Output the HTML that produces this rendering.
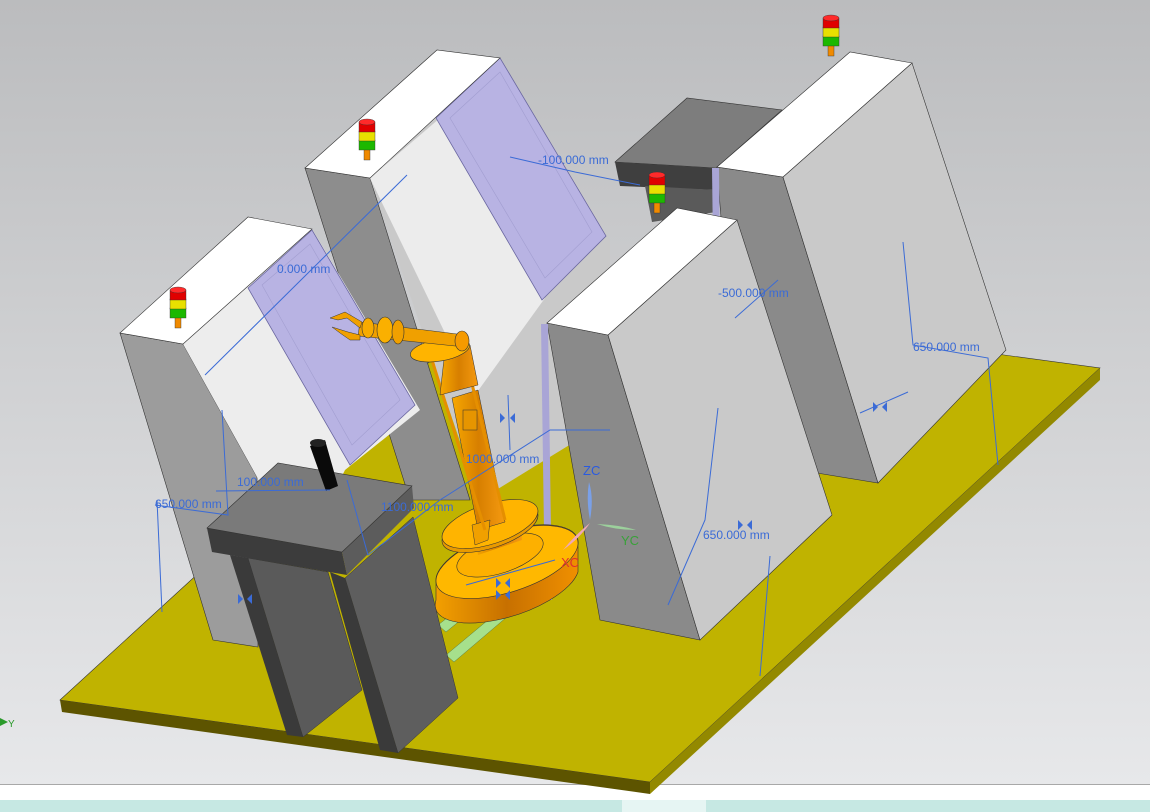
<!DOCTYPE html>
<html><head><meta charset="utf-8"><style>
html,body{margin:0;padding:0;width:1150px;height:812px;overflow:hidden;background:#fff}
svg{display:block}
text{font-family:"Liberation Sans",sans-serif}
</style></head><body>
<svg width="1150" height="812" viewBox="0 0 1150 812" xmlns="http://www.w3.org/2000/svg">
<defs>
<linearGradient id="bg" x1="0" y1="0" x2="0" y2="1">
<stop offset="0" stop-color="#bbbcbe"/><stop offset="1" stop-color="#e7e8ea"/></linearGradient>
<linearGradient id="col" x1="0" y1="0" x2="1" y2="0">
<stop offset="0" stop-color="#f7a800"/><stop offset="0.5" stop-color="#d77f00"/><stop offset="1" stop-color="#f59a10"/></linearGradient>
<linearGradient id="bside" x1="0" y1="0" x2="1" y2="0">
<stop offset="0" stop-color="#f3a000"/><stop offset="0.5" stop-color="#c77000"/><stop offset="1" stop-color="#f09000"/></linearGradient>
<g id="sl">
<rect x="-3" y="26" width="6" height="12" fill="#f08a00" stroke="#333" stroke-width="0.4"/>
<rect x="-8" y="18" width="16" height="10" fill="#1cb800" stroke="#333" stroke-width="0.4"/>
<rect x="-8" y="9" width="16" height="10" fill="#e8e000" stroke="#333" stroke-width="0.4"/>
<rect x="-8" y="0" width="16" height="10" fill="#e00000" stroke="#333" stroke-width="0.4"/>
<ellipse cx="0" cy="0" rx="8" ry="3" fill="#ff2a2a" stroke="#333" stroke-width="0.4"/>
</g>
</defs>
<rect x="0" y="0" width="1150" height="785" fill="url(#bg)"/>
<rect x="0" y="784" width="1150" height="1" fill="#a8a8a8"/>
<rect x="0" y="785" width="1150" height="15" fill="#fff"/>
<rect x="0" y="800" width="1150" height="12" fill="#c6e8e3"/>
<rect x="622" y="800" width="84" height="12" fill="#e6f5f3"/>

<!-- floor plate -->
<polygon points="60,700 510,288 1100,368 650,782" fill="#c0b300" stroke="#333" stroke-width="0.6"/>
<polygon points="60,700 650,782 650,794 62,712" fill="#5d5400"/>
<polygon points="650,782 1100,368 1100,380 650,794" fill="#938900"/>

<!-- dark box behind -->
<polygon points="615,162 687,98 782,110 716,168" fill="#7d7d7d" stroke="#333" stroke-width="0.6"/>
<polygon points="615,162 716,168 716,190 620,186" fill="#3f3f3f"/>
<polygon points="645,186 716,190 716,212 652,222" fill="#5a5a5a"/>

<!-- cabinet 2 (back middle) -->
<polygon points="305,168 370,178 470,500 410,500" fill="#8d8d8d" stroke="#333" stroke-width="0.6"/>
<polygon points="370,178 500,58 610,240 610,420 480,500" fill="#c9c9c9"/>
<polygon points="370,178 440,118 545,298 475,395" fill="#ececec"/>
<polygon points="436,118 500,58 606,236 542,300" fill="#b8b3e3" stroke="#6a67a0" stroke-width="0.8"/>
<polygon points="450,118 500,72 592,232 545,278" fill="none" stroke="#a29ed0" stroke-width="0.6"/>
<polygon points="305,168 437,50 500,58 370,178" fill="#fff" stroke="#333" stroke-width="0.6"/>

<!-- cabinet 4 (back right) -->
<polygon points="717,167 783,177 878,483 817,473 722,230" fill="#8a8a8a" stroke="#333" stroke-width="0.6"/>
<polygon points="712,168 719,168 722,470 716,470" fill="#a9a5d6"/>
<polygon points="783,177 912,63 1006,350 878,483" fill="#c9c9c9" stroke="#333" stroke-width="0.6"/>
<polygon points="717,167 850,52 912,63 783,177" fill="#fff" stroke="#333" stroke-width="0.6"/>

<!-- cabinet 3 (right front) -->
<polygon points="547,323 608,335 700,640 600,620" fill="#8a8a8a" stroke="#333" stroke-width="0.6"/>
<polygon points="541,324 548,324 552,600 545,600" fill="#a9a5d6"/>
<polygon points="608,335 737,220 832,515 700,640" fill="#c9c9c9" stroke="#333" stroke-width="0.6"/>
<polygon points="547,323 677,208 737,220 608,335" fill="#fff" stroke="#333" stroke-width="0.6"/>

<!-- cabinet 1 (left) -->
<polygon points="120,333 183,344 257,477 258,647 213,640" fill="#9c9c9c" stroke="#333" stroke-width="0.6"/>
<polygon points="183,344 312,229 420,410 345,470 300,560 257,477" fill="#ededed"/>
<polygon points="248,288 312,230 415,405 350,465" fill="#b8b3e3" stroke="#6a67a0" stroke-width="0.8"/>
<polygon points="262,285 310,244 400,400 352,445" fill="none" stroke="#a29ed0" stroke-width="0.6"/>
<polygon points="120,333 248,217 312,229 183,344" fill="#fff" stroke="#333" stroke-width="0.6"/>

<!-- green rails -->
<polygon points="438,625 470,600 478,606 446,632" fill="#a6e08c" stroke="#5a7a4a" stroke-width="0.5"/>
<polygon points="446,655 500,610 508,616 454,662" fill="#a6e08c" stroke="#5a7a4a" stroke-width="0.5"/>

<!-- robot base -->
<path d="M436,578 A74,30 -18 0 1 578,545 L578,572 A74,30 -18 0 1 436,600 Z" fill="url(#bside)" stroke="#333" stroke-width="0.6"/>
<ellipse cx="507" cy="562" rx="74" ry="30" transform="rotate(-18 507 562)" fill="#ffb800" stroke="#333" stroke-width="0.6"/>
<ellipse cx="500" cy="555" rx="45" ry="18" transform="rotate(-18 500 555)" fill="#fdb000" stroke="#333" stroke-width="0.6"/>
<polygon points="478,555 522,540 520,515 474,528" fill="url(#col)"/>
<ellipse cx="490" cy="528" rx="50" ry="20" transform="rotate(-18 490 528)" fill="#e99a00" stroke="#333" stroke-width="0.6"/>
<ellipse cx="490" cy="524" rx="50" ry="20" transform="rotate(-18 490 524)" fill="#ffb400" stroke="#333" stroke-width="0.6"/>
<polygon points="478,530 505,522 478,390 452,398" fill="url(#col)" stroke="#333" stroke-width="0.5"/>
<polygon points="472,525 490,520 488,540 475,545" fill="#f0a000" stroke="#333" stroke-width="0.5"/>
<line x1="432" y1="360" x2="485" y2="530" stroke="#e58f00" stroke-width="3"/>
<line x1="465" y1="355" x2="505" y2="520" stroke="#e58f00" stroke-width="3"/>
<polygon points="440,395 478,385 470,345 445,350" fill="url(#col)" stroke="#333" stroke-width="0.5"/>
<rect x="463" y="410" width="14" height="20" fill="#e69500" stroke="#333" stroke-width="0.5"/>
<ellipse cx="440" cy="350" rx="30" ry="11" transform="rotate(-10 440 350)" fill="#ffb400" stroke="#333" stroke-width="0.6"/>
<polygon points="360,322 465,335 465,347 358,336" fill="#f0a000" stroke="#333" stroke-width="0.5"/>
<ellipse cx="462" cy="341" rx="7" ry="10" fill="#f59a00" stroke="#333" stroke-width="0.6"/>
<ellipse cx="385" cy="330" rx="8" ry="13" fill="#fab000" stroke="#333" stroke-width="0.6"/>
<ellipse cx="398" cy="332" rx="6" ry="12" fill="#f0a000" stroke="#333" stroke-width="0.6"/>
<ellipse cx="368" cy="328" rx="6" ry="10" fill="#f8ab00" stroke="#333" stroke-width="0.6"/>
<path d="M362,322 L345,312 L330,318 L338,320 L347,318 L360,328 Z" fill="#f0a000" stroke="#333" stroke-width="0.5"/>
<path d="M360,335 L348,332 L332,327 L340,333 L350,340 L360,340 Z" fill="#f0a000" stroke="#333" stroke-width="0.5"/>

<!-- pedestal -->
<polygon points="230,555 248,558 303,737 287,735" fill="#3a3a3a"/>
<polygon points="248,558 328,572 362,690 303,737" fill="#5a5a5a" stroke="#333" stroke-width="0.5"/>
<polygon points="330,572 345,578 398,753 380,750" fill="#3a3a3a"/>
<polygon points="345,578 413,517 458,698 398,753" fill="#5e5e5e" stroke="#333" stroke-width="0.5"/>
<polygon points="207,528 342,552 347,575 212,552" fill="#3c3c3c"/>
<polygon points="342,552 412,486 414,508 347,575" fill="#5c5c5c"/>
<polygon points="207,528 278,463 412,486 342,552" fill="#7a7a7a" stroke="#333" stroke-width="0.6"/>
<polygon points="310,446 325,440 338,486 326,491" fill="#0a0a0a"/>
<ellipse cx="318" cy="443" rx="8" ry="4" fill="#222"/>

<!-- stack lights -->
<use href="#sl" transform="translate(178,290)"/>
<use href="#sl" transform="translate(367,122)"/>
<use href="#sl" transform="translate(657,175)"/>
<use href="#sl" transform="translate(831,18)"/>

<!-- dimension lines -->
<g stroke="#3b6bd6" stroke-width="1" fill="none">
<line x1="205" y1="375" x2="407" y2="175"/>
<polyline points="510,157 575,172 640,185"/>
<polyline points="735,318 778,280"/>
<polyline points="903,242 913,345 988,358 998,465"/>
<polyline points="157,500 162,612"/>
<polyline points="155,505 228,515 222,410"/>
<polyline points="216,491 330,490"/>
<polyline points="347,480 368,555 440,500 550,430 610,430"/>
<polyline points="508,395 510,450"/>
<polyline points="718,408 705,520 668,605"/>
<polyline points="770,556 760,676"/>
<polyline points="860,413 908,392"/>
<polyline points="466,585 555,560"/>
</g>
<g fill="#3b6bd6">
<polygon points="500,413 505,418 500,423"/><polygon points="515,413 510,418 515,423"/>
<polygon points="738,520 743,525 738,530"/><polygon points="752,520 747,525 752,530"/>
<polygon points="873,402 878,407 873,412"/><polygon points="887,402 882,407 887,412"/>
<polygon points="238,594 243,599 238,604"/><polygon points="252,594 247,599 252,604"/>
<polygon points="496,578 501,583 496,588"/><polygon points="510,578 505,583 510,588"/>
<polygon points="496,590 501,595 496,600"/><polygon points="510,590 505,595 510,600"/>
</g>
<g font-size="12" fill="#3b6bd6">
<text x="277" y="273">0.000 mm</text>
<text x="538" y="164">-100.000 mm</text>
<text x="718" y="297">-500.000 mm</text>
<text x="913" y="351">650.000 mm</text>
<text x="466" y="463">1000.000 mm</text>
<text x="237" y="486">100.000 mm</text>
<text x="155" y="508">650.000 mm</text>
<text x="381" y="511">1100.000 mm</text>
<text x="703" y="539">650.000 mm</text>
</g>
<!-- axes -->
<path d="M589,482 Q594,498 590,520 Q586,500 589,482Z" fill="#7aa0e8"/>
<path d="M597,524 Q620,525 636,530 Q615,530 597,524Z" fill="#9cd09c"/>
<path d="M590,523 Q580,538 563,550 Q575,535 590,523Z" fill="#f0a8b8"/>
<text x="583" y="475" font-size="13" fill="#2a5be0">ZC</text>
<text x="621" y="545" font-size="13" fill="#3aa03a">YC</text>
<text x="561" y="567" font-size="13" fill="#e03030">XC</text>
<path d="M0,718 L8,722 L0,726Z" fill="#2a9a2a"/>
<text x="8" y="727" font-size="10" fill="#2a9a2a">Y</text>
</svg>
</body></html>
